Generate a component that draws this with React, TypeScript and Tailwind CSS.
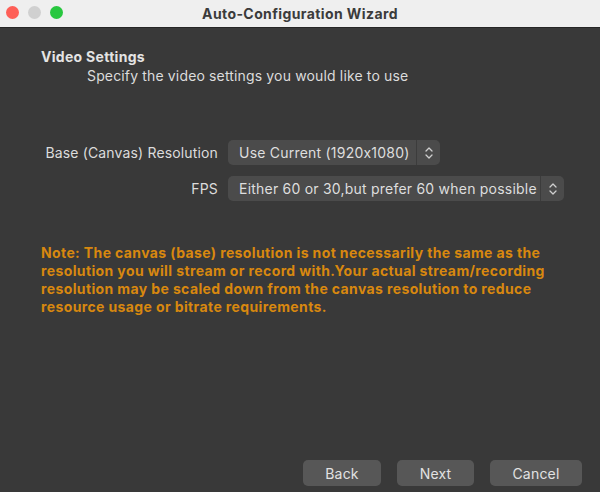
/* ---------- Small pieces ---------- */

function UpDown() {
  return (
    <svg width="10" height="14" viewBox="0 0 10 14" fill="none" stroke="#cfcfcf" strokeWidth="1.3" strokeLinecap="round" strokeLinejoin="round">
      <path d="M2 5 L5 2 L8 5" />
      <path d="M2 9 L5 12 L8 9" />
    </svg>
  );
}

function Combo({ value, width }: { value: string; width: string }) {
  return (
    <div className={`flex h-[25px] items-stretch rounded-[5px] bg-[#4b4b4b] ${width}`}>
      <div className="flex flex-1 items-center whitespace-nowrap pl-[11px] text-[14px] tracking-[0.22px] text-[#dedede]">
        {value}
      </div>
      <div className="w-px bg-[#3c3c3c]" />
      <div className="flex w-[23px] items-center justify-center">
        <UpDown />
      </div>
    </div>
  );
}

function Btn({ label, width }: { label: string; width: string }) {
  return (
    <button className={`h-[26px] rounded-[5px] bg-[#575757] text-[14px] tracking-[0.2px] text-[#e2e2e2] ${width}`}>
      {label}
    </button>
  );
}

/* ========== Component ========== */

export default function App() {
  return (
    <div
      className="flex h-[492px] w-[600px] flex-col overflow-hidden bg-[#393939] [font-feature-settings:'calt'_0]"
      style={{ fontFamily: 'Inter, "Liberation Sans", sans-serif' }}
    >
      {/* Title bar */}
      <div className="relative flex h-[28px] shrink-0 items-center justify-center border-b border-[#262626] bg-[#efefef]">
        <div className="absolute left-[6px] top-[6px] flex gap-[9px]">
          <span className="h-[13px] w-[13px] rounded-full bg-[#fe5f57]" />
          <span className="h-[13px] w-[13px] rounded-full bg-[#d0d0d0]" />
          <span className="h-[13px] w-[13px] rounded-full bg-[#28c73f]" />
        </div>
        <span className="text-[14px] font-bold tracking-[0.4px] text-[#3b3b3b]">Auto-Configuration Wizard</span>
      </div>

      <div className="flex flex-1 flex-col">
        {/* Header */}
        <div className="pl-[41px] pt-[20px]">
          <h1 className="text-[14px] font-bold leading-[18px] tracking-[0.3px] text-[#e4e4e4]">Video Settings</h1>
          <p className="pl-[46px] text-[14px] leading-[20px] tracking-[0.15px] text-[#dcdcdc]">
            Specify the video settings you would like to use
          </p>
        </div>

        {/* Form */}
        <div className="mt-[54px] grid grid-cols-[218px_auto] items-center gap-x-[10px] gap-y-[11px]">
          <span className="text-right text-[14px] tracking-[0.15px] text-[#dcdcdc]">Base (Canvas) Resolution</span>
          <Combo value="Use Current (1920x1080)" width="w-[212px]" />
          <span className="text-right text-[14px] tracking-[0.15px] text-[#dcdcdc]">FPS</span>
          <Combo value="Either 60 or 30,but prefer 60 when possible" width="w-[336px]" />
        </div>

        {/* Note */}
        <p className="mt-[43px] w-[560px] pl-[41px] text-[14px] font-bold leading-[18px] tracking-[0.38px] text-[#d8880f]">
          Note: The canvas (base) resolution is not necessarily the same as the resolution you will stream or
          record with.Your actual stream/recording resolution may be scaled down from the canvas resolution to
          reduce resource usage or bitrate requirements.
        </p>

        {/* Buttons */}
        <div className="mt-auto flex justify-end gap-[16px] pb-[6px] pr-[18px]">
          <Btn label="Back" width="w-[78px]" />
          <Btn label="Next" width="w-[77px]" />
          <Btn label="Cancel" width="w-[92px]" />
        </div>
      </div>
    </div>
  );
}
